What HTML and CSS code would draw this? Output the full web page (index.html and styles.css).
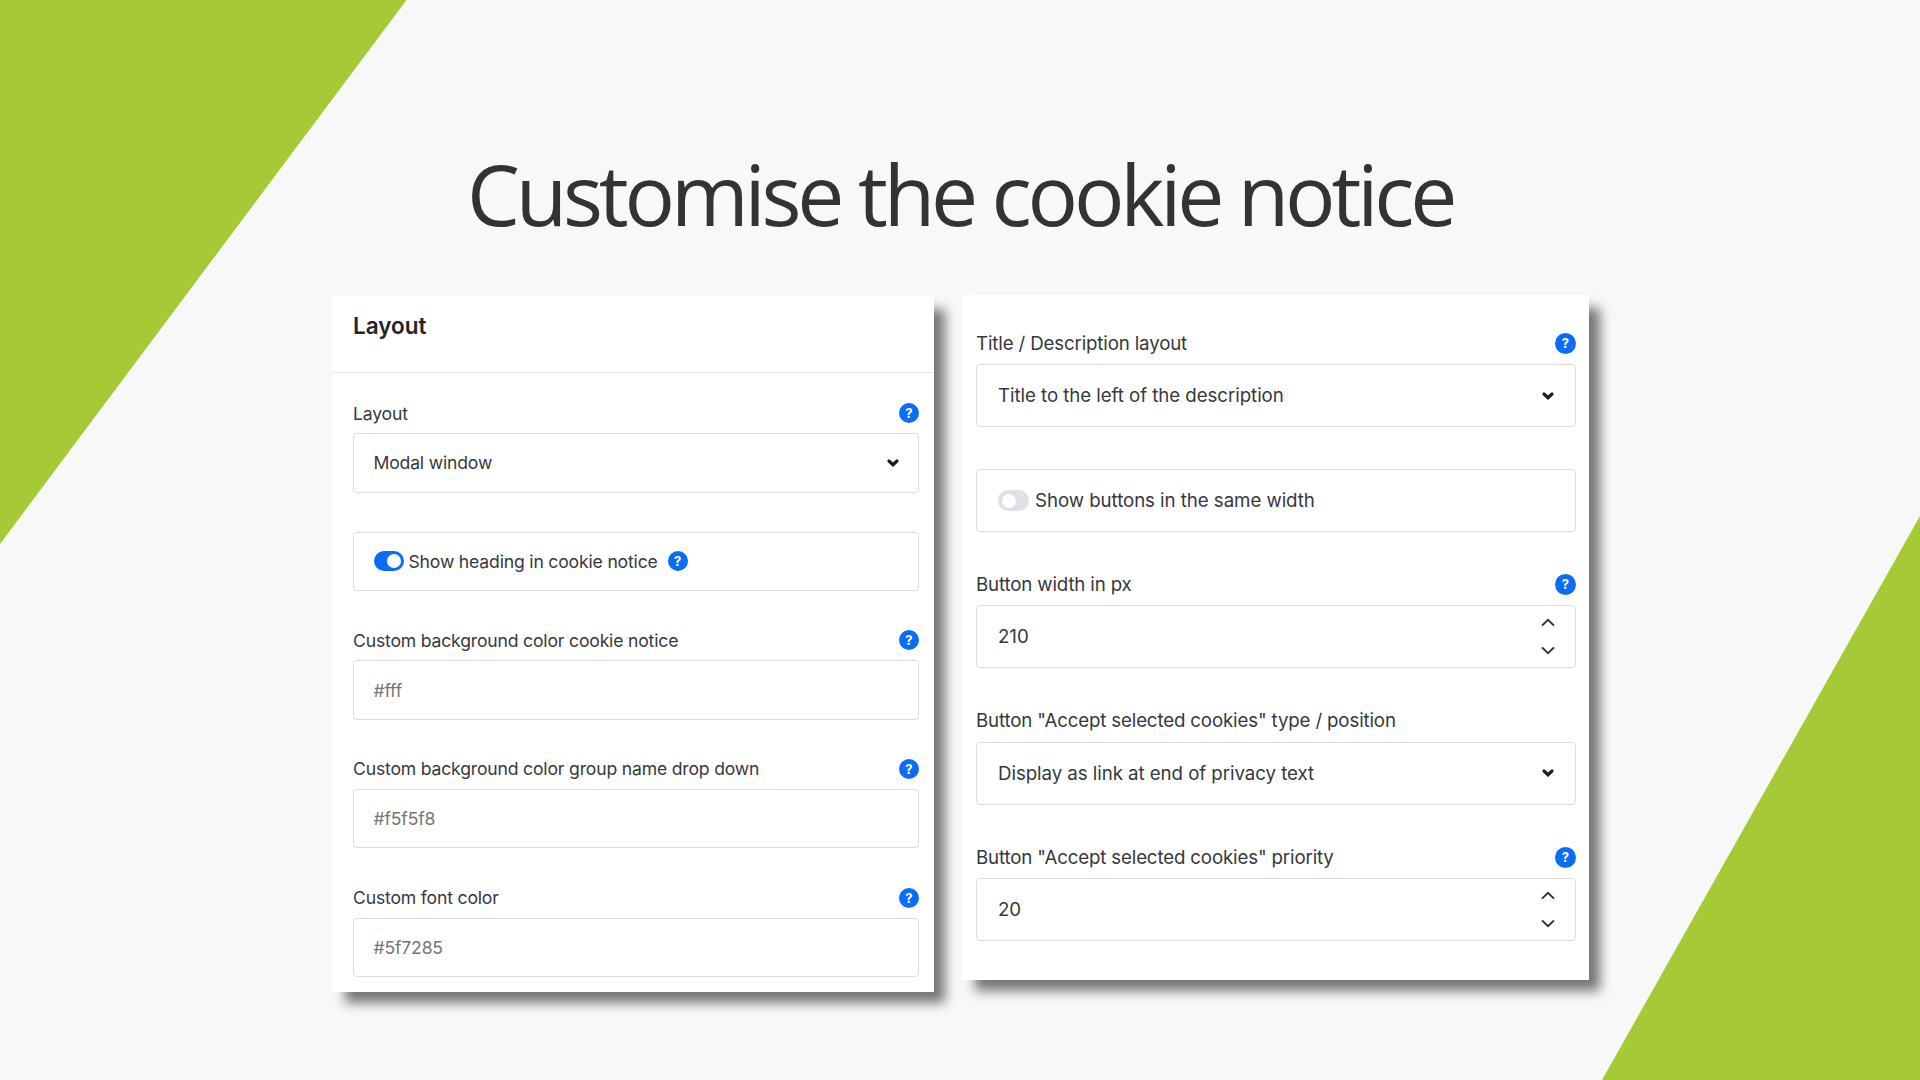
FILE: index.html
```html
<!DOCTYPE html>
<html lang="en">
<head>
    <meta charset="UTF-8">
    <meta name="viewport" content="width=device-width, initial-scale=1.0">
    <title>Customise the cookie notice</title>
    <link rel="stylesheet" href="styles.css">
</head>
<body>

    <!-- Icons used in the panels -->
    <svg class="sprite" width="0" height="0">
        <symbol id="arrow" viewBox="0 0 12 8">
            <path d="M2 2l4 3.7L10 2" fill="none" stroke="currentColor" stroke-width="3.2" stroke-linecap="round"/>
        </symbol>
        <symbol id="up" viewBox="0 0 14 9">
            <path d="M1 7.6l6-5.8 6 5.8" fill="none" stroke="currentColor" stroke-width="2"/>
        </symbol>
        <symbol id="down" viewBox="0 0 14 9">
            <path d="M1 1.4l6 5.8 6-5.8" fill="none" stroke="currentColor" stroke-width="2"/>
        </symbol>
    </svg>

    <div class="slide">
        <!-- Green corners -->
        <svg class="corners" viewBox="0 0 1920 1080">
            <polygon points="0,0 406.5,0 0,544"/>
            <polygon points="1920,516 1920,1080 1602,1080"/>
        </svg>

        <h1 class="title">Customise the cookie notice</h1>

        <div class="panels">
            <div class="panel panel-left">
                <h2 class="panel-title">Layout</h2>

                <div class="panel-body">
                    <div class="field">
                        <div class="label"><span>Layout</span><span class="help">?</span></div>
                        <div class="box"><span>Modal window</span><svg class="arrow"><use href="#arrow"/></svg></div>
                    </div>

                    <div class="box box-switch">
                        <span class="switch switch-on"></span>
                        <span>Show heading in cookie notice</span>
                        <span class="help">?</span>
                    </div>

                    <div class="field">
                        <div class="label"><span>Custom background color cookie notice</span><span class="help">?</span></div>
                        <div class="box placeholder">#fff</div>
                    </div>

                    <div class="field">
                        <div class="label"><span>Custom background color group name drop down</span><span class="help">?</span></div>
                        <div class="box placeholder">#f5f5f8</div>
                    </div>

                    <div class="field">
                        <div class="label"><span>Custom font color</span><span class="help">?</span></div>
                        <div class="box placeholder">#5f7285</div>
                    </div>
                </div>
            </div>

            <div class="panel panel-right">
                <div class="field">
                    <div class="label"><span>Title / Description layout</span><span class="help">?</span></div>
                    <div class="box"><span>Title to the left of the description</span><svg class="arrow"><use href="#arrow"/></svg></div>
                </div>

                <div class="box box-switch">
                    <span class="switch"></span>
                    <span>Show buttons in the same width</span>
                </div>

                <div class="field">
                    <div class="label"><span>Button width in px</span><span class="help">?</span></div>
                    <div class="box">
                        <span>210</span>
                        <span class="stepper"><svg><use href="#up"/></svg><svg><use href="#down"/></svg></span>
                    </div>
                </div>

                <div class="field">
                    <div class="label"><span>Button "Accept selected cookies" type / position</span></div>
                    <div class="box"><span>Display as link at end of privacy text</span><svg class="arrow"><use href="#arrow"/></svg></div>
                </div>

                <div class="field">
                    <div class="label"><span>Button "Accept selected cookies" priority</span><span class="help">?</span></div>
                    <div class="box">
                        <span>20</span>
                        <span class="stepper"><svg><use href="#up"/></svg><svg><use href="#down"/></svg></span>
                    </div>
                </div>
            </div>
        </div>
    </div>

</body>
</html>
```

FILE: styles.css
```css
* {
    box-sizing: border-box;
}

body {
    margin: 0;
    font-family: Inter, "Liberation Sans", sans-serif;
    color: #36383c;
}

.sprite {
    position: absolute;
}

.slide {
    position: relative;
    width: 1920px;
    height: 1080px;
    overflow: hidden;
    background-color: #f8f8f8;
}

/* Green shapes behind the content */
.corners {
    position: absolute;
    top: 0;
    left: 0;
    width: 1920px;
    height: 1080px;
    fill: #a6c936;
}

.title {
    position: relative;
    margin: 0;
    padding: 137px 0 0 467px;
    height: 295px;
    font-family: "Open Sans", sans-serif;
    font-size: 84px;
    font-weight: 400;
    line-height: 114px;
    letter-spacing: -4.2px;
    white-space: nowrap;
    color: #333;
}

/* Panels */
.panels {
    position: relative;
    display: flex;
    align-items: flex-start;
    gap: 28px;
    padding-left: 332px;
}

.panel {
    background-color: #fff;
    box-shadow: 12px 12px 11px -1px rgba(0, 0, 0, 0.52);
    white-space: nowrap;
}

.panel-left {
    width: 602px;
    height: 696px;
    margin-top: 1px;
    font-size: 17.6px;
    letter-spacing: -0.18px;
}

.panel-right {
    width: 627px;
    height: 685px;
    padding: 33px 13px 0 14px;
    font-size: 18.7px;
    letter-spacing: -0.06px;
}

.panel-title {
    height: 77px;
    margin: 0;
    padding: 14px 21px 0;
    border-bottom: 1px solid #e8e8e8;
    font-size: 22.5px;
    font-weight: 600;
    line-height: 31px;
    letter-spacing: 0;
    color: #222428;
}

.panel-body {
    padding: 25px 15px 0 21px;
}

/* Fields */
.label {
    display: flex;
    align-items: center;
    justify-content: space-between;
    height: 30px;
    margin-bottom: 5px;
}

.box {
    display: flex;
    align-items: center;
    justify-content: space-between;
    height: 59.5px;
    padding: 0 19.5px;
    border: 1px solid #dcdcdc;
    border-radius: 4px;
}

.panel-left .field {
    height: 128.6px;
}

.panel-left .box-switch {
    margin: 5px 0 34.3px;
}

.panel-right .field {
    height: 136.4px;
}

.panel-right .label {
    margin-bottom: 6px;
    letter-spacing: -0.15px;
}

.panel-right .box {
    height: 63px;
    padding: 0 21px;
}

.panel-right .box-switch {
    margin: 5px 0 37px;
}

.placeholder {
    color: #757575;
}

.help {
    flex: none;
    width: 20px;
    height: 20px;
    border-radius: 50%;
    background-color: #0b6cf5;
    color: #fff;
    font-size: 13px;
    font-weight: 700;
    line-height: 20px;
    letter-spacing: 0;
    text-align: center;
}

.panel-right .help {
    width: 21px;
    height: 21px;
    line-height: 21px;
}

/* Switches */
.panel .box-switch {
    justify-content: flex-start;
}

.box-switch .help {
    margin-left: 10px;
}

.switch {
    width: 30px;
    height: 20px;
    margin-right: 5px;
    padding: 3px;
    border-radius: 11px;
    background-color: #e0e0e6;
}

.switch::before {
    content: "";
    display: block;
    width: 14px;
    height: 14px;
    border-radius: 50%;
    background-color: #fff;
}

.switch-on {
    padding-left: 13px;
    background-color: #0b6cf5;
}

.panel-right .switch {
    width: 31px;
    height: 21px;
    margin-right: 6px;
    padding: 3.5px;
}

/* Icons on the right side of a box */
.arrow {
    width: 12px;
    height: 8px;
    color: #1c1d20;
}

.stepper {
    display: flex;
    flex-direction: column;
    gap: 19px;
    margin-right: -1px;
    color: #333;
}

.stepper svg {
    width: 14px;
    height: 9px;
}
```
